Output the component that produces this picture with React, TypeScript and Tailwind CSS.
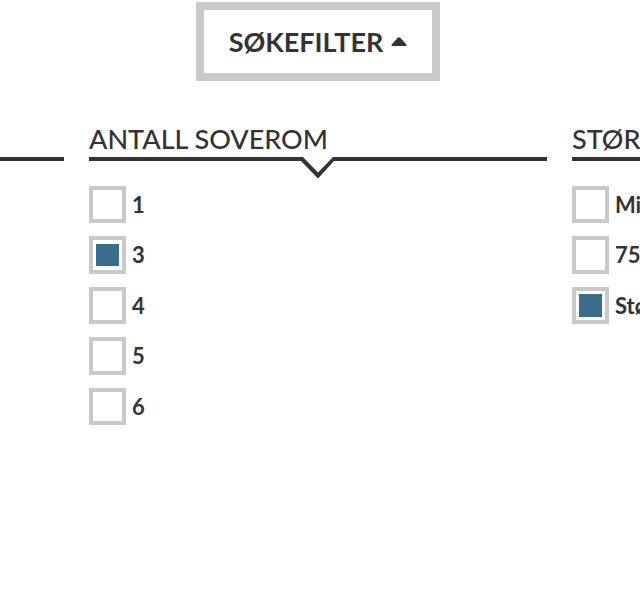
import { useState } from "react";

type Option = { label: string; checked?: boolean };
type Group = { id: string; title: string; options: Option[]; active?: boolean };

const groups: Group[] = [
  { id: "forrige", title: "", options: [] },
  {
    id: "soverom",
    title: "ANTALL SOVEROM",
    active: true,
    options: [
      { label: "1" },
      { label: "3", checked: true },
      { label: "4" },
      { label: "5" },
      { label: "6" },
    ],
  },
  {
    id: "storrelse",
    title: "STØRRELSE",
    options: [
      { label: "Mindre" },
      { label: "75" },
      { label: "Større", checked: true },
    ],
  },
];

function Pointer() {
  return (
    <svg
      className="absolute top-full left-1/2 -translate-x-1/2"
      width="36"
      height="22"
      viewBox="0 0 36 22"
      aria-hidden="true"
    >
      <path d="M3 0H33V4L18 19L3 4Z" fill="#fff" />
      <path d="M0 0H3L18 15.6L33 0H36V4H34L18 21.5L1 4H0Z" fill="#333" />
    </svg>
  );
}

function FilterGroup({ group }: { group: Group }) {
  return (
    <section className="w-[72%] shrink-0">
      <div className="relative h-[42px] border-b-4 border-[#333]">
        <h2 className="text-[27px] leading-10 font-medium whitespace-nowrap">{group.title}</h2>
        {group.active && <Pointer />}
      </div>
      <ul className="mt-[25px] flex flex-col gap-[13px]">
        {group.options.map((option, i) => (
          <li key={option.label} className="group flex items-center odd:h-[37px] even:h-[38px]">
            <input
              id={`${group.id}-${i}`}
              type="checkbox"
              defaultChecked={option.checked}
              className="h-full w-[37px] shrink-0 appearance-none border-4 border-[#c9c9c9] bg-clip-content p-[3px] group-even:py-1 checked:bg-[#386d8c]"
            />
            <label
              htmlFor={`${group.id}-${i}`}
              className="pl-[6px] text-[22px] leading-8 font-bold whitespace-nowrap"
            >
              {option.label}
            </label>
          </li>
        ))}
      </ul>
    </section>
  );
}

export default function App() {
  const [open, setOpen] = useState(true);
  return (
    <main className="overflow-hidden bg-white pt-[2px] font-['Lato',sans-serif] text-[#333]">
      <div className="mr-1 flex justify-center">
        <button
          type="button"
          aria-expanded={open}
          onClick={() => setOpen(!open)}
          className="flex h-[79px] w-[244px] items-center justify-center gap-2 border-8 border-[#c9c9c9] text-[27px] leading-8 font-bold"
        >
          SØKEFILTER
          <svg width="16" height="9" viewBox="0 0 16 9" aria-hidden="true">
            <path d="M7 0.6Q8 -0.2 9 0.6L15.4 7.4Q16 9 14.6 9H1.4Q0 9 0.6 7.4Z" fill="#333" />
          </svg>
        </button>
      </div>
      {open && (
        <div className="mt-[38px] mr-1 flex justify-center gap-[25px]">
          {groups.map((group) => (
            <FilterGroup key={group.id} group={group} />
          ))}
        </div>
      )}
    </main>
  );
}
